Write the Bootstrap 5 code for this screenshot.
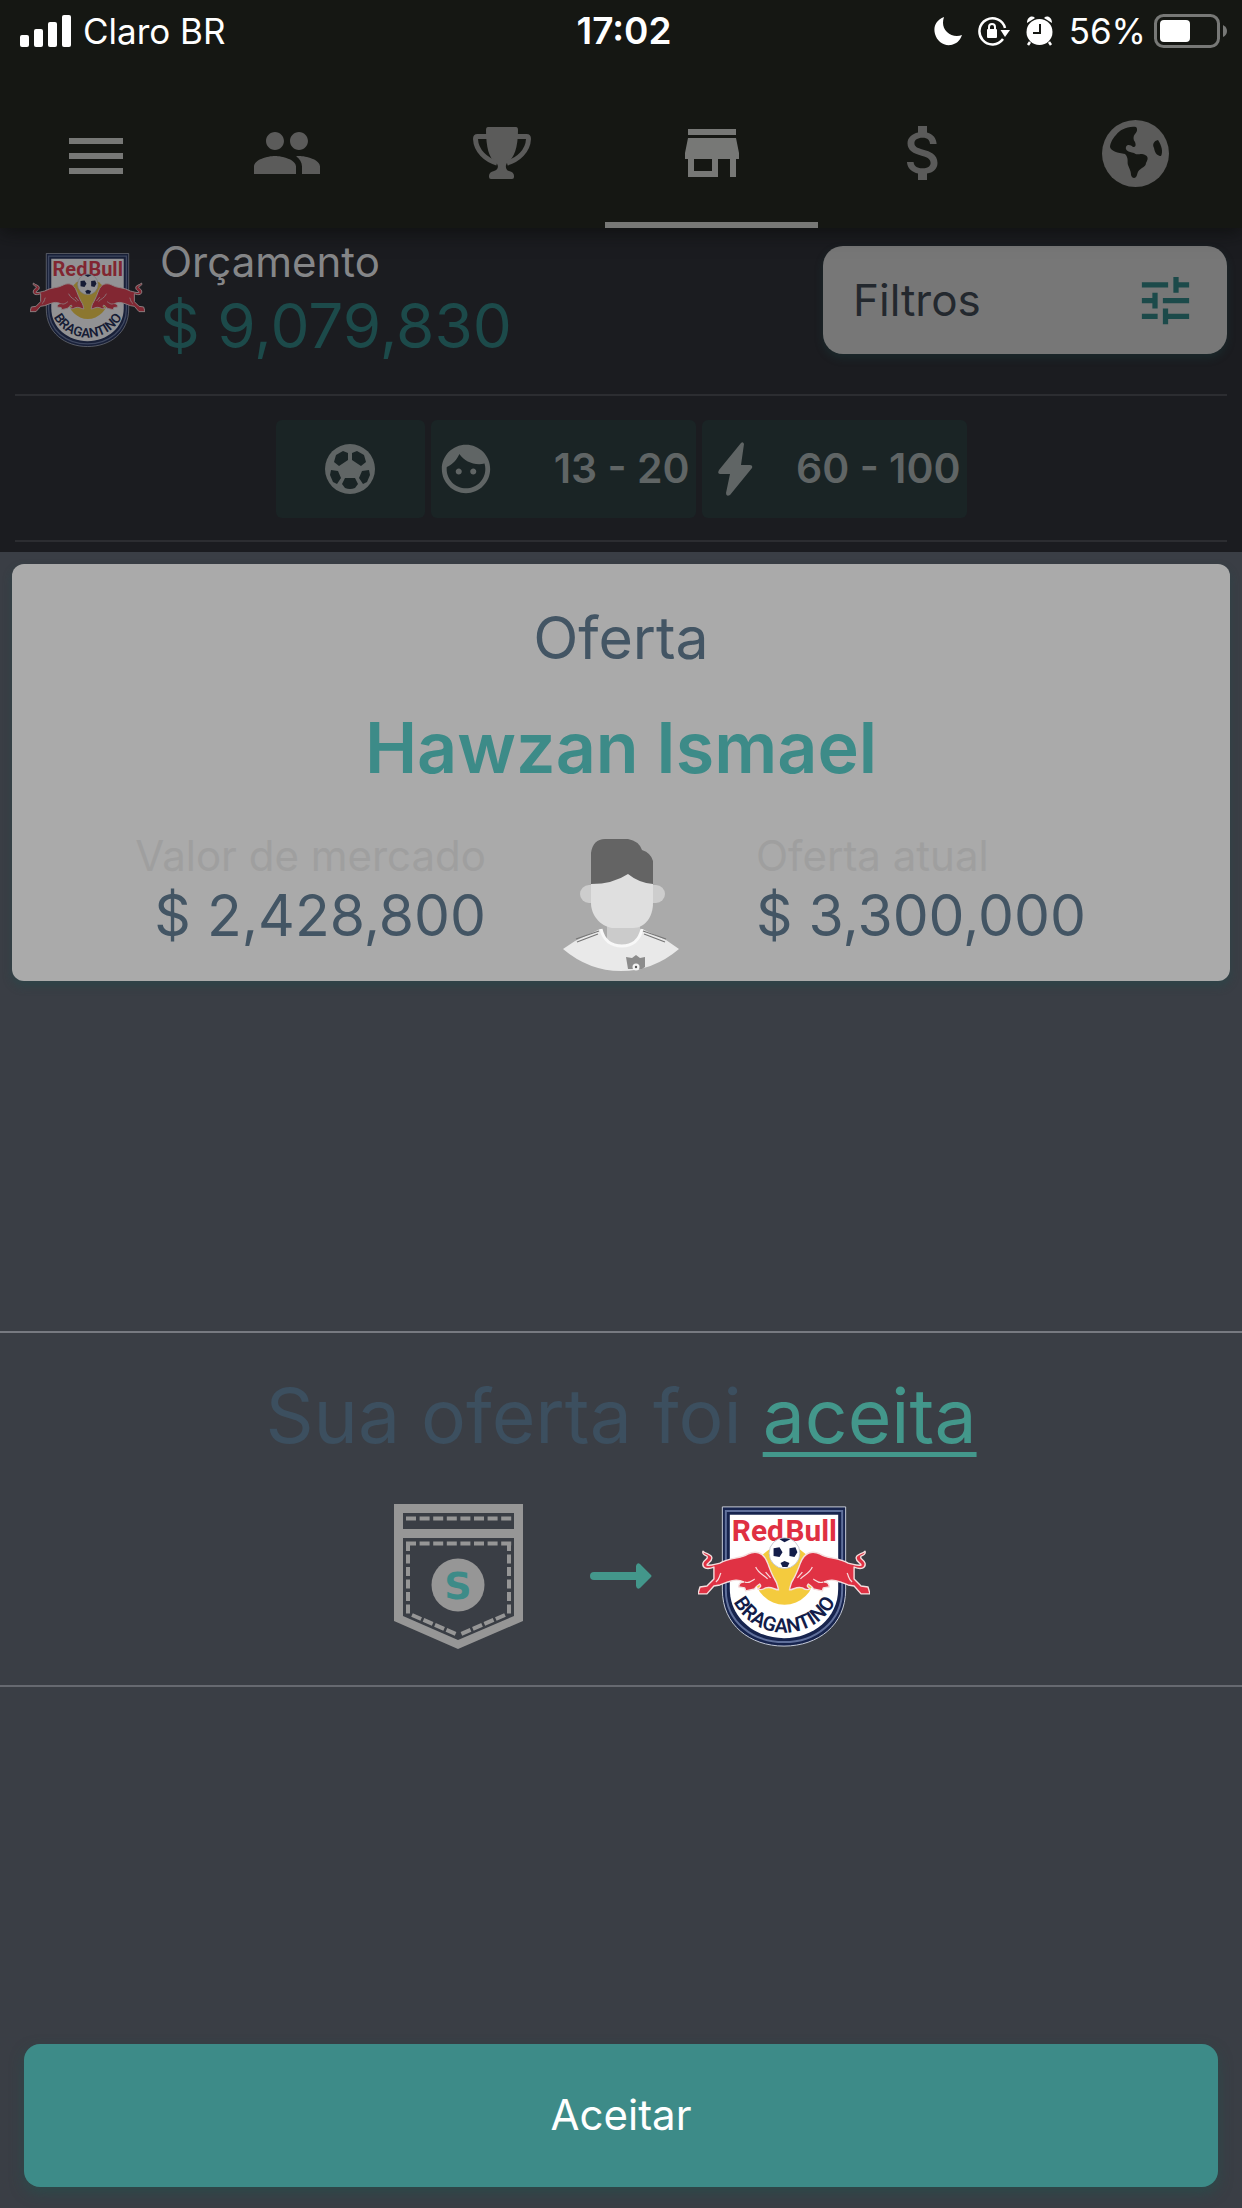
<!DOCTYPE html>
<html lang="pt-BR">
<head>
<meta charset="utf-8">
<meta name="viewport" content="width=device-width, initial-scale=1">
<title>Oferta - Hawzan Ismael</title>
<link href="https://cdn.jsdelivr.net/npm/bootstrap@5.3.0/dist/css/bootstrap.min.css" rel="stylesheet">
<style>
  :root { --ink: #435564; --teal: #3d8b88; --page: #3a3e45; --panel: #1b1c20; --bar: #151713; }
  body { font-family: Inter, "Liberation Sans", sans-serif; background: var(--page); font-size: 42px; line-height: 1.2; }
  svg { display: block; flex: none; }
  .topbar { background: var(--bar); box-shadow: 0 4px 18px rgba(10, 11, 10, .7); z-index: 2; }
  .status { display: grid; grid-template-columns: 1fr auto 1fr; padding: 12px 14px 28px 20px; font-size: 35px; line-height: 38px; color: #fff; }
  .clock { font-size: 37px; }
  .tabs { height: 150px; }
  .tab-menu { width: 181px; padding: 6px 0 0 60px; color: #777876; }
  .tab-item { flex: 1 1 0; color: #5b5b5a; border-bottom: 6px solid transparent; padding-top: 6px; }
  .tab-item.active { color: #777876; border-bottom-color: #777876; }
  .panel { background: var(--panel); padding: 0 15px 10px; }
  .budget { padding: 18px 0 20px 13px; border-bottom: 2px solid #2c2d31; }
  .budget-text { margin-left: 12px; }
  .crest-dim { opacity: .52; }
  .budget-label { line-height: 32px; color: #858688; }
  .budget-value { line-height: 96px; font-size: 62px; color: #1c4a4a; }
  .filter-btn { width: 404px; height: 108px; padding: 0 30px; border: 0; border-radius: 20px; background: #777; color: #23282e; box-shadow: 0 4px 8px rgba(28, 74, 74, .3); font-size: 44px; }
  .filter-btn svg { color: #1c4a4a; }
  .chips { padding: 24px 0 22px; gap: 6px; border-bottom: 2px solid #2c2d31; }
  .chip { height: 98px; border: 0; border-radius: 6px; background: #1a2425; color: #606565; font-size: 41px; font-weight: 600; }
  .chip-ball { width: 149px; }
  .chip-range { width: 265px; padding: 0 6px; }
  .offer { margin: 12px; padding: 38px 24px 10px; background: #aaa; border-radius: 12px; box-shadow: 0 5px 10px rgba(30, 75, 75, .45); }
  .offer-title { font-size: 59px; line-height: 72px; color: var(--ink); margin: 0 0 32px; font-weight: 400; }
  .offer-player { font-size: 70px; line-height: 84px; color: var(--teal); margin: 0 0 46px; font-weight: 600; }
  .offer-figures { display: grid; grid-template-columns: 1fr auto 1fr; column-gap: 77px; }
  .figure-label { line-height: 40px; color: #9f9f9f; }
  .figure-value { font-size: 57px; line-height: 80px; color: var(--ink); }
  .verdict { border-top: 2px solid #777a81; border-bottom: 2px solid #666970; padding: 35px 0 36px; margin-bottom: 20px; }
  .verdict-text { font-size: 75px; line-height: 96px; color: #3c4f5f; margin-bottom: 40px; }
  .verdict-text u { color: #43978b; text-decoration-thickness: 5px; text-underline-offset: 9px; }
  .transfer { gap: 46px; }
  .accept-btn { margin: 0 24px 21px; height: 143px; border: 0; border-radius: 16px; background: var(--teal); color: #fff; box-shadow: 0 6px 14px rgba(30, 85, 80, .5); }
  .crest-name { font: 700 30px Roboto, sans-serif; fill: #df3042; }
  .crest-city { font: 600 20px Roboto, sans-serif; fill: #131d49; text-anchor: middle; }
  .pocket-letter { font: 700 38px "DejaVu Sans", sans-serif; fill: var(--teal); text-anchor: middle; }
</style>
</head>
<body>
<svg width="0" height="0" class="position-absolute" aria-hidden="true">
  <defs>
    <path id="city-arc" d="M29 69A58 58 0 0 0 145 69"/>
    <g id="bull">
      <path d="M16 61C9 64 4 62 5 57C6 53 11 53 9 50C6 49 4 48 5 45C8 48 14 48 14 52C14 56 9 57 9 59C13 60 17 58 22 57C32 51 42 53 50 48C58 44 66 46 70 57C72 62 74 68 77 73C80 77 80 80 81 84C77 84 74 80 68 82C65 84 62 84 60 83C63 81 64 80 62 78C59 80 57 82 57 83L48 85L47 82L41 81C41 78 43 76 46 76C40 73 36 74 30 76L22 79L16 80L9 88L0 88L2 81L9 80L16 73Z" fill="#e03244" stroke="#f5dede" stroke-width="1.4" stroke-linejoin="round"/>
      <path d="M58 61C61 68 67 69 70 73M47 76C51 78 54 75 57 73M68 66L73 72M23 67C21 71 22 73 18 76" fill="none" stroke="#f8dadd" stroke-width="1.2"/>
    </g>
    <symbol id="crest" viewBox="0 0 173 141">
      <path d="M24.500 .5H148.500V84C148.500 119 121 140.500 86.500 140.500S24.500 119 24.500 84Z" fill="#17244e" stroke="#c7ccd8"/>
      <path d="M28 4.500H145V84C145 116 118 136.500 86.500 136.500S28 116 28 84Z" fill="none" stroke="#60709b" stroke-width="2"/>
      <path d="M32 8.500H141V83C141 112 116 132.500 86.500 132.500S32 112 32 83Z" fill="#fff"/>
      <circle cx="87" cy="69" r="30" fill="#f4cb3e"/>
      <text class="crest-name" x="34" y="35">Red</text>
      <text class="crest-name" x="88" y="35">Bull</text>
      <use href="#bull"/>
      <use href="#bull" transform="translate(173 0) scale(-1 1)"/>
      <circle cx="87" cy="47" r="15.500" fill="#fff" stroke="#b9bdc9" stroke-width=".8"/>
      <path d="M76 42L82 41L85 46L82 51L76 50ZM92 42L98 41L100 46L97 51L92 50ZM83 57L87 55L92 57L90 61L85 61ZM82 33Q87 31 93 33L87 36Z" fill="#131d49"/>
      <text class="crest-city"><textPath href="#city-arc" startOffset="50%">BRAGANTINO</textPath></text>
    </symbol>
  </defs>
</svg>

<div class="d-flex flex-column min-vh-100">
  <header class="topbar position-relative">
    <div class="status">
      <div class="d-flex align-items-center">
        <svg width="51" height="34" fill="#fff" class="me-2"><rect y="21" width="9" height="12" rx="2"/><rect x="14" y="15" width="9" height="18" rx="2"/><rect x="28" y="8" width="9" height="25" rx="2"/><rect x="42" y="1" width="9" height="32" rx="2"/></svg>
        <span class="ms-1">Claro BR</span>
      </div>
      <div class="clock fw-semibold">17:02</div>
      <div class="d-flex align-items-center justify-content-end">
        <svg width="28" height="30" viewBox="0 0 28 30" fill="#fff"><path d="M10 1C2 4-1 11 1 18S9 30 17 29C22 28 26 25 28 19C23 21 17 20 13 16S8 7 10 1Z"/></svg>
        <svg width="32" height="30" viewBox="0 0 32 30" fill="none" class="ms-3"><path d="M27 12A13 13 0 1 0 25 23" stroke="#fff" stroke-width="2.500"/><path d="M22.500 14H32L27 21Z" fill="#fff"/><rect x="9" y="13" width="10" height="9" rx="1" fill="#fff"/><path d="M11 13V11A3 3 0 0 1 17 11V13" stroke="#fff" stroke-width="2"/></svg>
        <svg width="27" height="30" viewBox="0 0 27 30" fill="#fff" class="ms-3"><circle cx="13.500" cy="16" r="13"/><path d="M1 7C1 1 6-1 9 2ZM26 7C26 1 21-1 18 2Z"/><path d="M4 26L2 29M23 26L25 29" stroke="#fff" stroke-width="2.500"/><path d="M14 8V17H7" stroke="#151713" stroke-width="2" fill="none"/></svg>
        <span class="ms-3">56%</span>
        <svg width="74" height="34" viewBox="0 0 74 34" class="ms-2"><rect x="1.500" y="1.500" width="63" height="31" rx="8" fill="none" stroke="#777876" stroke-width="3"/><rect x="6" y="6" width="30" height="22" rx="4" fill="#fff"/><path d="M69 11Q73 13 73 17T69 23Z" fill="#777876"/></svg>
      </div>
    </div>
    <nav class="tabs d-flex" aria-label="Principal">
      <a href="#" class="tab-menu d-flex align-items-center" aria-label="Menu"><svg width="72" height="72" viewBox="0 0 24 24" fill="currentColor"><path d="M3 18h18v-2H3v2zm0-5h18v-2H3v2zm0-7v2h18V6H3z"/></svg></a>
      <a href="#" class="tab-item d-flex align-items-center justify-content-center" aria-label="Elenco"><svg width="72" height="72" viewBox="0 0 24 24" fill="currentColor"><path d="M16 11c1.660 0 2.990-1.340 2.990-3S17.660 5 16 5c-1.660 0-3 1.340-3 3s1.340 3 3 3zm-8 0c1.660 0 2.990-1.340 2.990-3S9.660 5 8 5C6.340 5 5 6.340 5 8s1.340 3 3 3zm0 2c-2.330 0-7 1.170-7 3.500V19h14v-2.500c0-2.330-4.670-3.500-7-3.500zm8 0c-.29 0-.62.02-.97.05 1.160.84 1.970 1.970 1.970 3.450V19h6v-2.500c0-2.330-4.670-3.500-7-3.500z"/></svg></a>
      <a href="#" class="tab-item d-flex align-items-center justify-content-center" aria-label="Campeonatos"><svg width="64" height="54" viewBox="-6 -1 64 54" fill="currentColor"><path d="M15 0H43Q45 0 45 3C45 21 41 31 35 35C32 37 32 43 36 44Q41 45 41 49V50Q41 52 39 52H18Q16 52 16 50V49Q16 45 21 44C26 43 26 37 22 35C16 31 13 20 13 3Q13 0 15 0Z"/><path d="M15 9.500H4.500Q2.500 9.500 2.500 12C3 24 13 33 24 36M43 9.500H53.500Q55.500 9.500 55.500 12C55 24 45 33 34 36" fill="none" stroke="currentColor" stroke-width="5"/></svg></a>
      <a href="#" class="tab-item active d-flex align-items-center justify-content-center" aria-label="Mercado" aria-current="page"><svg width="72" height="72" viewBox="0 0 24 24" fill="currentColor"><path d="M20 4H4v2h16V4zm1 10v-2l-1-5H4l-1 5v2h1v6h10v-6h4v6h2v-6h1zm-9 4H6v-4h6v4z"/></svg></a>
      <a href="#" class="tab-item d-flex align-items-center justify-content-center" aria-label="Finanças"><svg width="72" height="72" viewBox="0 0 24 24" fill="currentColor"><path d="M11.800 10.900c-2.270-.59-3-1.200-3-2.150 0-1.090 1.010-1.850 2.700-1.850 1.780 0 2.440.85 2.500 2.100h2.210c-.07-1.720-1.120-3.300-3.210-3.810V3h-3v2.160c-1.940.42-3.500 1.680-3.500 3.610 0 2.310 1.910 3.460 4.700 4.130 2.500.6 3 1.480 3 2.410 0 .69-.49 1.790-2.700 1.790-2.060 0-2.870-.92-2.980-2.100h-2.200c.12 2.190 1.760 3.420 3.680 3.830V21h3v-2.150c1.950-.37 3.500-1.500 3.500-3.550 0-2.840-2.430-3.810-4.700-4.400z"/></svg></a>
      <a href="#" class="tab-item d-flex align-items-center justify-content-center" aria-label="Mundo"><svg width="67" height="67" viewBox="0 0 67 67"><circle cx="33.500" cy="33.500" r="33.500" fill="currentColor"/><path d="M34 7C25 6 18 10 14 15C10 19 8 24 8 27C9 31 16 33 23 34C27 38 25 42 26 45C28 50 29 52 29 55C30 59 34 59 35 55C36 51 37 50 40 48C43 46 44 45 44 43C47 38 46 35 40 34C36 34 34 35 32 33C26 32 23 30 24 27C25 24 29 25 31 27C34 27 34 25 33 22C31 20 31 16 33 14C35 12 36 9 34 7ZM56 20C52 21 50 24 52 28C53 34 56 36 59 36C61 32 60 26 56 20Z" fill="#151713"/></svg></a>
    </nav>
  </header>

  <section class="panel">
    <div class="budget d-flex align-items-start">
      <svg class="crest-dim" width="120" height="108"><use href="#crest" x="2" y="7" width="115" height="94"/></svg>
      <div class="budget-text flex-grow-1">
        <div class="budget-label">Orçamento</div>
        <div class="budget-value">$ 9,079,830</div>
      </div>
      <button type="button" class="filter-btn d-flex align-items-center justify-content-between">Filtros
        <svg width="63" height="63" viewBox="0 0 24 24" fill="currentColor"><path d="M3 17v2h6v-2H3zM3 5v2h10V5H3zm10 16v-2h8v-2h-8v-2h-2v6h2zM7 9v2H3v2h4v2h2V9H7zm14 4v-2H11v2h10zm-6-4h2V7h4V5h-4V3h-2v6z"/></svg>
      </button>
    </div>
    <div class="chips d-flex justify-content-center">
      <button type="button" class="chip chip-ball d-flex align-items-center justify-content-center" aria-label="Posição">
        <svg width="50" height="50" viewBox="0 0 50 50"><circle cx="25" cy="25" r="25" fill="currentColor"/><path d="M23 9V16L14 22L9 18L11 11L18 7ZM27 9V16L36 22L41 18L39 11L32 7ZM6 26L13 27L16 34L12 40L8 38L5 31ZM44 26L37 27L34 34L38 40L42 38L45 31ZM20 34H30L33 40L30 44Q25 46 20 44L17 40Z" fill="#1a2425"/></svg>
      </button>
      <button type="button" class="chip chip-range d-flex align-items-center justify-content-between">
        <svg width="58" height="58" viewBox="0 0 24 24" fill="currentColor"><path d="M9 11.750c-.69 0-1.250.56-1.250 1.250s.56 1.250 1.250 1.250 1.250-.56 1.250-1.250-.56-1.250-1.250-1.250zm6 0c-.69 0-1.250.56-1.250 1.250s.56 1.250 1.250 1.250 1.250-.56 1.250-1.250-.56-1.250-1.250-1.250zM12 2C6.480 2 2 6.480 2 12s4.480 10 10 10 10-4.480 10-10S17.520 2 12 2zm0 18c-4.410 0-8-3.590-8-8 0-.29.02-.58.05-.86 2.360-1.050 4.230-2.980 5.210-5.370C11.070 8.330 14.050 10 17.420 10c.78 0 1.530-.09 2.250-.26.21.71.33 1.470.33 2.260 0 4.410-3.590 8-8 8z"/></svg>
        <span>13 - 20</span>
      </button>
      <button type="button" class="chip chip-range d-flex align-items-center justify-content-between">
        <svg width="53" height="54" viewBox="-10 0 53 54" fill="currentColor"><path d="M23 1Q25-1 26 2L23 23H32Q35 23 34 26L12 53Q8 55 8 51L12 32H2Q-1 32 1 28Z"/></svg>
        <span>60 - 100</span>
      </button>
    </div>
  </section>

  <main class="flex-grow-1 d-flex flex-column">
    <article class="offer text-center">
      <h1 class="offer-title">Oferta</h1>
      <h2 class="offer-player">Hawzan Ismael</h2>
      <div class="offer-figures">
        <div class="text-end">
          <div class="figure-label">Valor de mercado</div>
          <div class="figure-value">$ 2,428,800</div>
        </div>
        <svg width="116" height="135" viewBox="0 -3 116 135" role="img" aria-label="Hawzan Ismael">
          <path d="M44 80H77V104Q60 112 44 102Z" fill="#cbcbcb"/>
          <rect x="17" y="46" width="85" height="18" rx="9" fill="#cdcdcd"/>
          <path d="M28 30H90V64C90 78 82 89 70 89H49C37 87 28 76 28 64Z" fill="#dfdfdf"/>
          <path d="M28 45V14Q30 0 42 0H65Q76 2 79 11Q88 14 90 22V45Q76 44 65 35Q50 45 28 45Z" fill="#646464"/>
          <path d="M0 110L12 102L37 90Q42 106 59 106Q76 106 79 90L103 101L116 110Q90 132 58 132Q26 132 0 110Z" fill="#e9e9e9"/>
          <path d="M38 90Q42 107 59 107Q75 107 79 90" fill="none" stroke="#f8f8f8" stroke-width="3"/>
          <path d="M13 100L36 92M14 103L35 95M80 92L103 100M81 95L102 103" stroke="#777" stroke-width="1.300"/>
          <path d="M63 118L69 119L73 116L77 119L82 118V128L79 130H65Z" fill="#8c8c8c"/><circle cx="73" cy="128" r="3.500" fill="#f2f2f2"/><circle cx="73" cy="128" r="1.200" fill="#555"/>
        </svg>
        <div class="text-start">
          <div class="figure-label">Oferta atual</div>
          <div class="figure-value">$ 3,300,000</div>
        </div>
      </div>
    </article>

    <div class="flex-grow-1 d-flex flex-column justify-content-center">
      <section class="verdict text-center">
        <div class="verdict-text">Sua oferta foi <u>aceita</u></div>
        <div class="transfer d-flex align-items-center justify-content-center">
          <svg width="172" height="145" viewBox="-22 0 172 145" role="img" aria-label="Clube vendedor">
            <path fill-rule="evenodd" d="M0 0H129V117L64 145L0 117ZM9 9V25H120V9ZM9 34V112L64 136L120 112V34Z" fill="#969696"/>
            <g fill="none" stroke="#969696" stroke-width="4"><path d="M12 14.500H118M12 39.500H118" stroke-dasharray="10 3.600"/><path d="M14 38V111M115 38V111" stroke-dasharray="9 3.500"/><path d="M18 111L62 130M111 111L67 130" stroke-dasharray="10 2.500"/></g>
            <circle cx="64" cy="81" r="26.500" fill="#969696"/>
            <text class="pocket-letter" x="64" y="95">S</text>
          </svg>
          <svg width="62" height="26" viewBox="0 0 62 26" fill="#43978b"><path d="M4 9H46V3Q47-1 50 1L61 12Q62 13 61 14L50 25Q47 27 46 23V17H4Q0 17 0 13T4 9Z"/></svg>
          <svg width="172" height="141" role="img" aria-label="Red Bull Bragantino"><use href="#crest" width="172" height="141"/></svg>
        </div>
      </section>
    </div>
    <button type="button" class="accept-btn">Aceitar</button>
  </main>
</div>
<script src="https://cdn.jsdelivr.net/npm/bootstrap@5.3.0/dist/js/bootstrap.bundle.min.js"></script>
</body>
</html>
